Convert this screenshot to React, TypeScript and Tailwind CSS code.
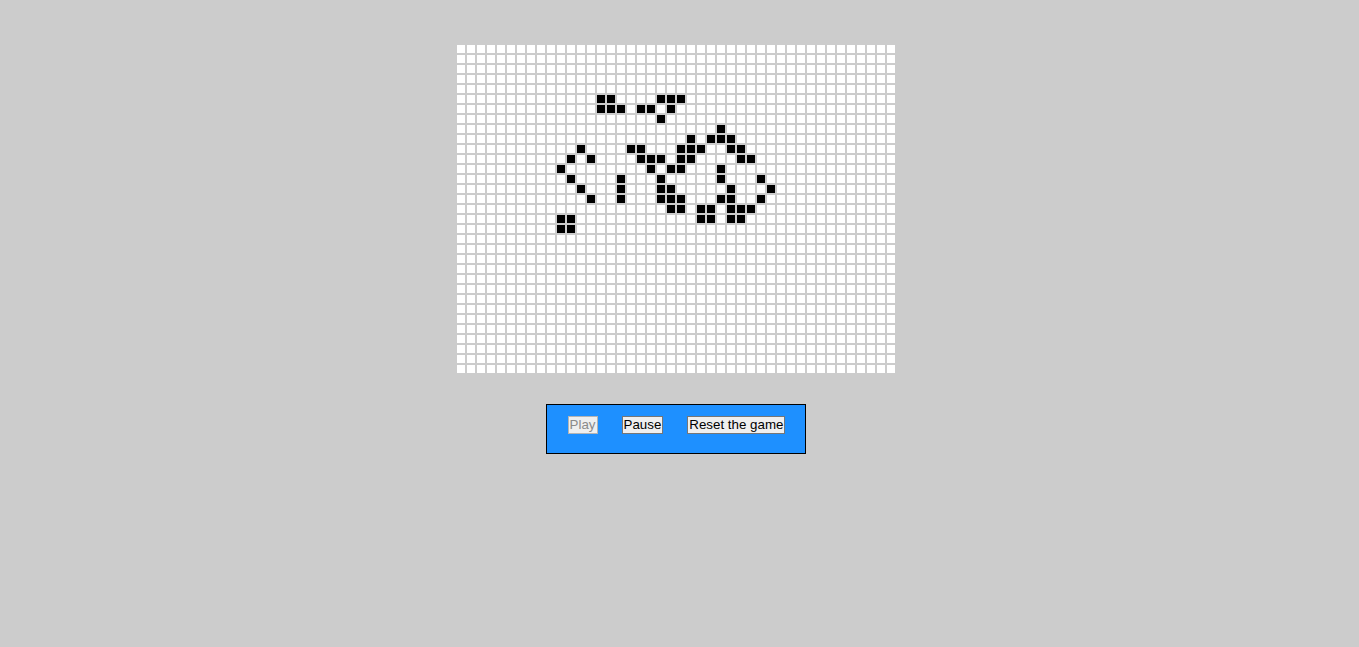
import React from "react";

const COLS = 44;
const ROWS = 33;

const alive: Record<number, number[]> = {
  5: [14, 15, 20, 21, 22],
  6: [14, 15, 16, 18, 19, 21],
  7: [20],
  8: [26],
  9: [23, 25, 26, 27],
  10: [12, 17, 18, 22, 23, 24, 27, 28],
  11: [11, 13, 18, 19, 20, 22, 23, 28, 29],
  12: [10, 19, 21, 22, 26],
  13: [11, 16, 20, 26, 30],
  14: [12, 16, 20, 21, 27, 31],
  15: [13, 16, 20, 21, 22, 26, 27, 30],
  16: [21, 22, 24, 25, 27, 28, 29],
  17: [10, 11, 24, 25, 27, 28],
  18: [10, 11],
};

export default function App() {
  const cells: React.ReactNode[] = [];
  for (let r = 0; r < ROWS; r++) {
    for (let c = 0; c < COLS; c++) {
      const on = (alive[r] || []).includes(c);
      cells.push(
        <div
          key={`${r}-${c}`}
          className={on ? "w-[8px] h-[8px] bg-black" : "w-[8px] h-[8px] bg-white"}
        />
      );
    }
  }
  return (
    <div className="min-h-[647px] bg-[#cccccc] font-['Liberation_Sans',Arial,sans-serif]">
      <div className="w-[1352px] flex flex-col items-center pt-[44px]">
        <div className="grid grid-cols-[repeat(44,8px)] gap-[2px] p-[1px] bg-[#cccccc]">
          {cells}
        </div>
        <div className="mt-[30px] w-[260px] h-[50px] border border-black bg-[#1e90ff] flex justify-center gap-[24px] pt-[11px] pl-[1px]">
          <button
            disabled
            className="h-[18px] px-[1px] border border-[#b4b4b4] bg-[#efefef] text-[13.33px] leading-[16px] text-[#8a8a8a]"
          >
            Play
          </button>
          <button className="h-[18px] px-[1px] border border-[#767676] bg-[#efefef] text-[13.33px] leading-[16px] text-black">
            Pause
          </button>
          <button className="h-[18px] px-[1px] border border-[#767676] bg-[#efefef] text-[13.33px] leading-[16px] text-black">
            Reset the game
          </button>
        </div>
      </div>
    </div>
  );
}
